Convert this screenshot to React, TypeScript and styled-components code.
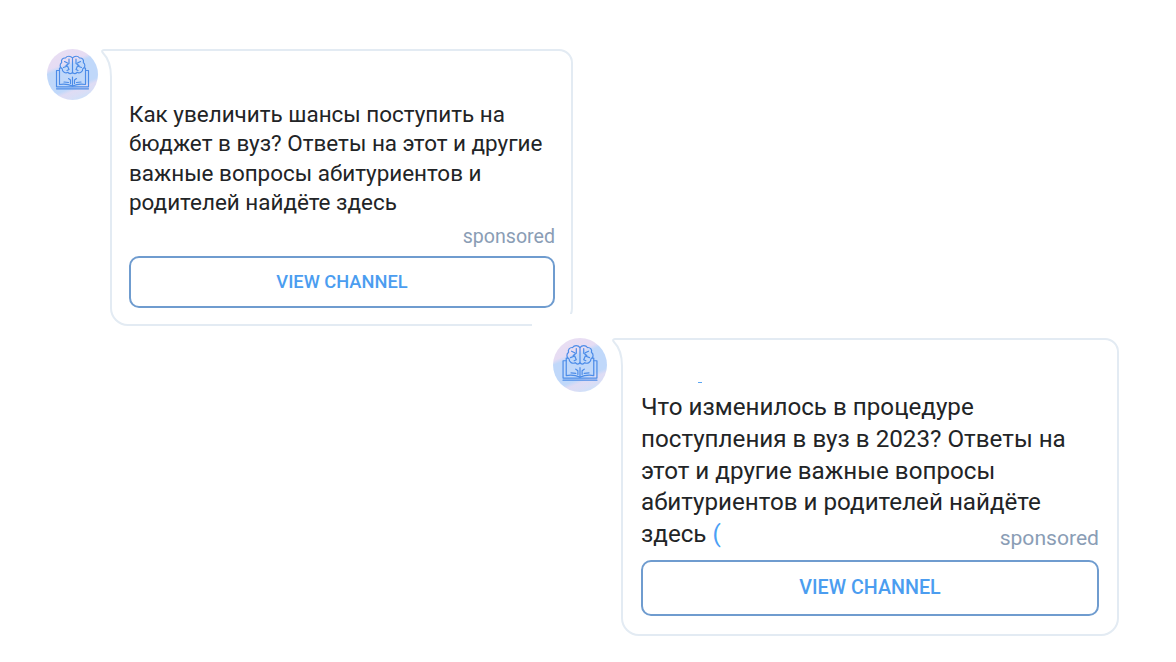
import React from "react"
import styled, { createGlobalStyle } from "styled-components"

const GlobalStyle = createGlobalStyle`
  html, body {
    margin: 0;
    background: #fff;
    font-family: Roboto, "Noto Sans", sans-serif;
  }
`

type Sized = {
  $big?: boolean
}

const Page = styled.div`
  width: 1176px;
  height: 662px;
  box-sizing: border-box;
  padding-top: 49px;
  display: flex;
  flex-direction: column;
  gap: 12px;
  overflow: hidden;
`

const Post = styled.div<Sized>`
  display: flex;
  align-items: flex-start;
  margin-left: ${p => (p.$big ? "553px" : "47px")};
  gap: ${p => (p.$big ? "14px" : "12px")};
`

const Avatar = styled.div<Sized>`
  width: ${p => (p.$big ? "54px" : "51px")};
  height: ${p => (p.$big ? "54px" : "51px")};
  flex: none;
  border-radius: 50%;
  overflow: hidden;
  background: linear-gradient(
    158deg,
    #eadff3 0%,
    #e6dcf3 30%,
    #c0d8fa 36%,
    #c0d8fa 68%,
    #dfdcf4 74%,
    #d9def6 82%,
    #cde1fa 90%
  );
`

const Bubble = styled.div<Sized>`
  position: relative;
  box-sizing: border-box;
  width: ${p => (p.$big ? "498px" : "463px")};
  height: ${p => (p.$big ? "298px" : "277px")};
  padding: ${p => (p.$big ? "42px 18px 0 18px" : "49px 16px 0 17px")};
  border: 2px solid #e3ebf3;
  border-radius: 0 14px 18px 18px;
  background: #fff;
`

const Tail = styled.svg`
  position: absolute;
  left: -11px;
  top: -2px;
`

const CornerMask = styled.div`
  position: absolute;
  right: -3px;
  bottom: -3px;
  width: 42px;
  height: 13px;
  background: #fff;
`

const Speck = styled.div`
  width: 4px;
  height: 1px;
  margin-left: 57px;
  background: #5aa5f2;
`

const Message = styled.div<Sized>`
  margin-top: ${p => (p.$big ? "9px" : "0")};
  font-size: ${p => (p.$big ? "24.2px" : "22.45px")};
  line-height: ${p => (p.$big ? "31.8px" : "29.4px")};
  color: #222426;
`

const LastLine = styled.div`
  display: flex;
  align-items: flex-end;
  font-size: 24.2px;
  line-height: 31.8px;
  color: #222426;
`

const Paren = styled.span`
  margin-left: 6px;
  color: #4ba0f5;
`

const Sponsored = styled.div<Sized>`
  text-align: right;
  color: #8a9db5;
  font-size: ${p => (p.$big ? "21.1px" : "19.6px")};
  line-height: ${p => (p.$big ? "24px" : "22px")};
  margin: ${p => (p.$big ? "0 0 1px auto" : "8px 0 0")};
`

const ChannelButton = styled.button<Sized>`
  display: block;
  width: 100%;
  box-sizing: border-box;
  height: ${p => (p.$big ? "56px" : "52px")};
  margin-top: ${p => (p.$big ? "9px" : "8px")};
  padding: 0;
  border: 2px solid #6f9ccf;
  border-radius: 10px;
  background: #fff;
  color: #4b9df0;
  font-family: inherit;
  font-weight: 500;
  font-size: ${p => (p.$big ? "19.7px" : "18.3px")};
`

const BrainBook = () => (
  <svg
    width="100%"
    height="100%"
    viewBox="0 0 51 51"
    fill="none"
    stroke="#4c8ce8"
    strokeWidth="1.15"
    strokeLinecap="round"
    strokeLinejoin="round"
  >
    {/* book */}
    <path d="M14 19h-1.500v16.500c4.500-0.800 9-0.300 13 1.500c4-1.800 8.500-2.300 13-1.500V19H37" />
    <path d="M12.500 21.500H9.500v16.300h32V21.500h-3" />
    <path d="M9.500 39.800h32" />
    <path d="M25.500 28v9M21.500 29.500l2 1.500v3.500M29.500 29.500l-2 1.500v3.500M17 33l4.500 0.500M34 33l-4.500 0.500" />
    {/* brain */}
    <path d="M25.500 9c-1.800-2.300-5.500-2.300-7 0c-2.800-0.300-4.700 2-3.800 4.500c-2.300 1.800-2 5.200 0.500 6.300c-0.200 3 3.300 5 5.800 3.500c1.300 1.800 3.500 1.700 4.500 0c1 1.700 3.200 1.800 4.500 0c2.500 1.500 6-0.500 5.800-3.500c2.500-1.100 2.800-4.500 0.500-6.300c0.900-2.500-1-4.800-3.800-4.500C31 6.700 27.300 6.700 25.500 9z" />
    <path d="M25.500 9v15" />
    <path d="M22 10v4.500l-3 2M17.500 12.500l3 1.500M16.500 18.500l4-1.500l1.500 3.500M20 21.500l2-1" />
    <path d="M29 10v4.500l3 2M33.500 12.500l-3 1.500M34.500 18.500l-4-1.500l-1.500 3.500M31 21.500l-2-1" />
  </svg>
)

type AdProps = {
  big?: boolean
  text: string
  lastWord?: string
}

const Ad = ({ big, text, lastWord }: AdProps) => (
  <Post $big={big}>
    <Avatar $big={big}>
      <BrainBook />
    </Avatar>
    <Bubble $big={big}>
      <Tail width="16" height="28" viewBox="0 0 16 28" fill="none">
        <path d="M10 28C10 15 7 9 2 4C0.500 2.500 1 1 3 1H16V28z" fill="#fff" />
        <path
          d="M10 28C10 15 7 9 2 4C0.500 2.500 1 1 3 1H16"
          stroke="#e3ebf3"
          strokeWidth="2"
        />
      </Tail>
      {big && <Speck />}
      <Message $big={big}>{text}</Message>
      {lastWord ? (
        <LastLine>
          <span>{lastWord}</span>
          <Paren>(</Paren>
          <Sponsored $big>sponsored</Sponsored>
        </LastLine>
      ) : (
        <Sponsored>sponsored</Sponsored>
      )}
      <ChannelButton $big={big}>VIEW CHANNEL</ChannelButton>
      {!big && <CornerMask />}
    </Bubble>
  </Post>
)

export default function App() {
  return (
    <Page>
      <GlobalStyle />
      <Ad text="Как увеличить шансы поступить на бюджет в вуз? Ответы на этот и другие важные вопросы абитуриентов и родителей найдёте здесь" />
      <Ad
        big
        lastWord="здесь"
        text="Что изменилось в процедуре поступления в вуз в 2023? Ответы на этот и другие важные вопросы абитуриентов и родителей найдёте"
      />
    </Page>
  )
}
